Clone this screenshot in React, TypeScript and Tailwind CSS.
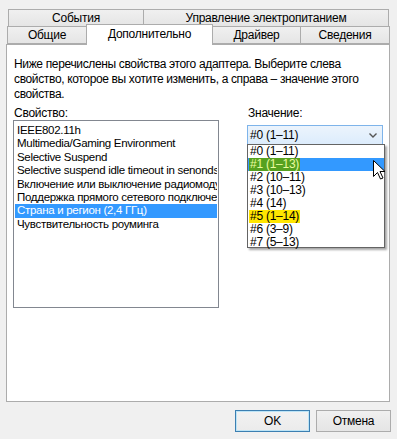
import React from 'react';

const font = { fontFamily: '"Liberation Sans", Arial, sans-serif' };

const properties = [
  'IEEE802.11h',
  'Multimedia/Gaming Environment',
  'Selective Suspend',
  'Selective suspend idle timeout in senonds',
  'Включение или выключение радиомодуля',
  'Поддержка прямого сетевого подключения',
  'Страна и регион (2,4 ГГц)',
  'Чувствительность роуминга',
];

const values = ['#0 (1–11)', '#1 (1–13)', '#2 (10–11)', '#3 (10–13)', '#4 (14)', '#5 (1–14)', '#6 (3–9)', '#7 (5–13)'];

function Tab({ label, width }: { label: string; width: string }) {
  return (
    <div
      className={`${width} flex items-center justify-center border border-[#acacac] -ml-px first:ml-0 bg-gradient-to-b from-[#f0f0f0] to-[#e5e5e5] text-[12px] leading-none text-black`}
    >
      {label}
    </div>
  );
}

export default function App() {
  return (
    <div
      className="w-[397px] h-[439px] bg-[#f0f0f0] overflow-hidden relative text-black tracking-[-0.25px]"
      style={font}
    >
      {/* Tab rows */}
      <div className="pt-[9px]">
        <div className="ml-[8px] flex h-[18px]">
          <Tab label="События" width="w-[136px]" />
          <Tab label="Управление электропитанием" width="w-[246px]" />
        </div>
        <div className="ml-[7px] flex h-[18px] -mt-px">
          <Tab label="Общие" width="w-[80px]" />
          <div className="relative z-10 -ml-px w-[127px] h-[21px] -mt-[2px] -mb-px bg-white border border-b-0 border-[#acacac] flex justify-center pt-[3px] text-[12px] leading-none">
            Дополнительно
          </div>
          <Tab label="Драйвер" width="w-[89px]" />
          <Tab label="Сведения" width="w-[90px]" />
        </div>
      </div>

      {/* Page */}
      <div className="ml-[6px] w-[384px] h-[358px] bg-white border border-[#acacac] px-[6px] pt-[12px]">
        <p className="pl-px text-[12px] leading-[15px] tracking-[-0.35px] whitespace-nowrap">
          Ниже перечислены свойства этого адаптера. Выберите слева
          <br />
          свойство, которое вы хотите изменить, а справа – значение этого
          <br />
          свойства.
        </p>

        <div className="flex mt-[4px]">
          <div className="w-[206px]">
            <div className="pl-px text-[12px] leading-[14px]">Свойство:</div>
            <div className="h-[188px] border border-[#828790] pt-[3px] px-px overflow-hidden">
              {properties.map((p, i) => (
                <div
                  key={p}
                  className={`px-[2px] h-[13.4px] text-[11.5px] tracking-[-0.3px] leading-[13.4px] whitespace-nowrap overflow-hidden ${
                    i === 6 ? 'bg-[#3399ff] text-white' : ''
                  }`}
                >
                  {p}
                </div>
              ))}
            </div>
          </div>

          <div className="ml-[28px] w-[138px] relative">
            <div className="pl-px text-[12px] leading-[14px]">Значение:</div>
            <div className="mt-[5px] h-[20px] border border-[#7eb4ea] bg-gradient-to-b from-[#ecf4fc] to-[#dcecfc] flex items-center pl-[2px] pr-[5px] text-[12px]">
              <span className="flex-1">#0 (1–11)</span>
              <svg width="8" height="5" viewBox="0 0 8 5">
                <path d="M0.5 0.5 L4 4 L7.5 0.5" fill="none" stroke="#555" strokeWidth="1.4" />
              </svg>
            </div>

            {/* Dropdown popup */}
            <div className="absolute left-0 top-[38px] w-[138px] h-[104px] bg-white border border-[#646464] shadow-[2px_2px_2px_rgba(0,0,0,0.35)] z-20">
              {values.map((v, i) => (
                <div
                  key={v}
                  className={`h-[13px] px-px flex whitespace-nowrap ${i === 1 ? 'bg-[#3399ff]' : ''}`}
                >
                  <span
                    className={`inline-block h-[13px] pl-px pr-[1px] text-[12px] leading-[13px] ${
                      i === 1 ? 'bg-[#56a11f] text-[#eafca0]' : i === 5 ? 'bg-[#ffe600]' : ''
                    }`}
                  >
                    {v}
                  </span>
                </div>
              ))}
            </div>

            {/* Mouse cursor */}
            <svg className="absolute left-[126px] top-[54px] z-30" width="13" height="20" viewBox="0 0 13 20">
              <path
                d="M0.5 0.5 L0.5 16.5 L4.5 12.5 L7.5 19 L10 18 L7 11.5 L12 11.5 Z"
                fill="white"
                stroke="black"
                strokeWidth="1"
              />
            </svg>
          </div>
        </div>
      </div>

      {/* Buttons */}
      <div className="flex justify-end gap-[6px] pr-[6px] mt-[8px]">
        <button className="w-[75px] h-[22px] border border-[#3c7fb1] bg-gradient-to-b from-[#f2f2f2] to-[#ebebeb] shadow-[inset_0_0_0_1px_#bde4f6] text-[12px] leading-none">
          OK
        </button>
        <button className="w-[75px] h-[22px] border border-[#acacac] bg-gradient-to-b from-[#f0f0f0] to-[#e5e5e5] text-[12px] leading-none">
          Отмена
        </button>
      </div>
    </div>
  );
}
